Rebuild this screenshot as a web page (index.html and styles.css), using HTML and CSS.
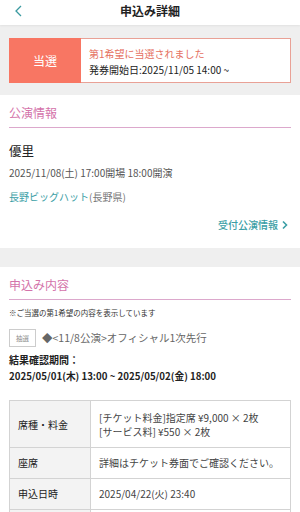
FILE: index.html
```html
<!DOCTYPE html>
<html lang="ja">
<head>
<meta charset="utf-8">
<title>申込み詳細</title>
<link rel="stylesheet" href="styles.css">
</head>
<body>
<header class="topbar">
  <span class="back"><svg width="9" height="12" viewBox="0 0 9 12"><path d="M7 1 L2 6 L7 11" fill="none" stroke="#3a9aa0" stroke-width="1.3"/></svg></span>
  <h1 class="title">申込み詳細</h1>
</header>
<div class="band">
  <div class="result-card">
    <div class="result-badge">当選</div>
    <div class="result-body">
      <p class="result-title">第1希望に当選されました</p>
      <p class="result-date">発券開始日:2025/11/05 14:00 ~</p>
    </div>
  </div>
</div>
<section class="panel panel-event">
  <h2 class="heading">公演情報</h2>
  <p class="artist">優里</p>
  <p class="datetime">2025/11/08(土) 17:00開場 18:00開演</p>
  <p class="venue"><span class="venue-name">長野ビッグハット</span>(長野県)</p>
  <div class="link-row"><a class="link">受付公演情報<svg width="8" height="10" viewBox="0 0 8 10"><path d="M2 1.5 L5.5 5 L2 8.5" fill="none" stroke="#3a9ea5" stroke-width="1.6"/></svg></a></div>
</section>
<div class="gap"></div>
<section class="panel panel-apply">
  <h2 class="heading">申込み内容</h2>
  <p class="note">※ご当選の第1希望の内容を表示しています</p>
  <div class="lottery">
    <span class="tag">抽選</span>
    <span class="lottery-name">◆&lt;11/8公演&gt;オフィシャル1次先行</span>
  </div>
  <p class="period-label">結果確認期間：</p>
  <p class="period">2025/05/01(木) 13:00 ~ 2025/05/02(金) 18:00</p>
  <table class="detail">
    <tr class="tall"><th>席種・料金</th><td>[チケット料金]指定席 ¥9,000 × 2枚<br>[サービス料] ¥550 × 2枚</td></tr>
    <tr><th>座席</th><td>詳細はチケット券面でご確認ください。</td></tr>
    <tr><th>申込日時</th><td>2025/04/22(火) 23:40</td></tr>
    <tr><th></th><td></td></tr>
  </table>
</section>
</body>
</html>
```
FILE: styles.css
```css
* { box-sizing: border-box; }
html, body { margin: 0; padding: 0; }
body {
  width: 300px;
  background: #efefef;
  font-family: "Noto Sans CJK JP", "Noto Sans", sans-serif;
  color: #333;
}
p, h1, h2 { margin: 0; }

.topbar {
  position: relative;
  height: 25px;
  padding-bottom: 3px;
  background: #fff;
  display: flex;
  align-items: center;
  justify-content: center;
  box-shadow: 0 1px 2px rgba(0,0,0,0.06);
}
.back {
  position: absolute;
  left: 14px;
  top: 5px;
  display: flex;
}
.title {
  font-size: 12px;
  font-weight: 700;
  line-height: 16px;
  color: #222;
}

.band { padding: 13px 9px 12px; }
.result-card {
  display: flex;
  height: 45px;
  background: #fff;
  border: 1px solid #e9a196;
}
.result-badge {
  width: 72px;
  margin: -1px 0 -1px -1px;
  background: #f87663;
  color: #fff;
  font-size: 12px;
  display: flex;
  align-items: center;
  justify-content: center;
}
.result-body {
  padding: 3px 0 0 8px;
  display: flex;
  flex-direction: column;
  justify-content: center;
}
.result-title {
  font-size: 10px;
  line-height: 16px;
  color: #e56f60;
}
.result-date {
  font-size: 10px;
  line-height: 16px;
  color: #222;
}

.panel {
  background: #fff;
  padding: 0 9px;
}
.heading {
  font-size: 12px;
  font-weight: 400;
  line-height: 18px;
  color: #d473aa;
  padding: 9px 0 5px;
  border-bottom: 1px solid #dca8cc;
}
.artist {
  margin-top: 14px;
  font-size: 12.5px;
  line-height: 18px;
  color: #222;
}
.datetime {
  margin-top: 5px;
  font-size: 10px;
  line-height: 16px;
  color: #555;
}
.venue {
  margin-top: 8px;
  font-size: 10px;
  line-height: 16px;
  color: #777;
}
.venue-name { color: #3a9ea5; }
.link-row {
  margin-top: 12px;
  padding-bottom: 15px;
  display: flex;
  justify-content: flex-end;
}
.link {
  display: flex;
  align-items: center;
  gap: 3px;
  font-size: 10px;
  line-height: 16px;
  color: #3a9ea5;
  font-weight: 500;
  margin-right: 2px;
}
.gap { height: 19px; }

.note {
  margin-top: 7px;
  font-size: 7.5px;
  line-height: 12px;
  color: #333;
}
.lottery {
  margin-top: 10px;
  display: flex;
  align-items: center;
  gap: 6px;
}
.tag {
  width: 27px;
  height: 18px;
  border: 1px solid #ccc;
  font-size: 6.5px;
  color: #888;
  display: flex;
  align-items: center;
  justify-content: center;
}
.lottery-name {
  font-size: 10.5px;
  color: #666;
  line-height: 16px;
}
.period-label {
  margin-top: 5px;
  font-size: 10px;
  font-weight: 700;
  line-height: 16px;
  color: #222;
}
.period {
  font-size: 9.7px;
  font-weight: 700;
  line-height: 16px;
  color: #222;
}
.detail {
  margin-top: 16px;
  width: 100%;
  border-collapse: collapse;
  font-size: 10px;
}
.detail th, .detail td {
  border: 1px solid #d3d3d3;
  height: 31px;
  padding: 0 8px;
  text-align: left;
  vertical-align: middle;
  line-height: 14px;
}
.detail tr.tall th, .detail tr.tall td { height: 47px; padding-top: 2px; }
.detail th {
  width: 81px;
  background: #f3f3f3;
  font-weight: 400;
  color: #222;
}
.detail td { color: #444; }
```
